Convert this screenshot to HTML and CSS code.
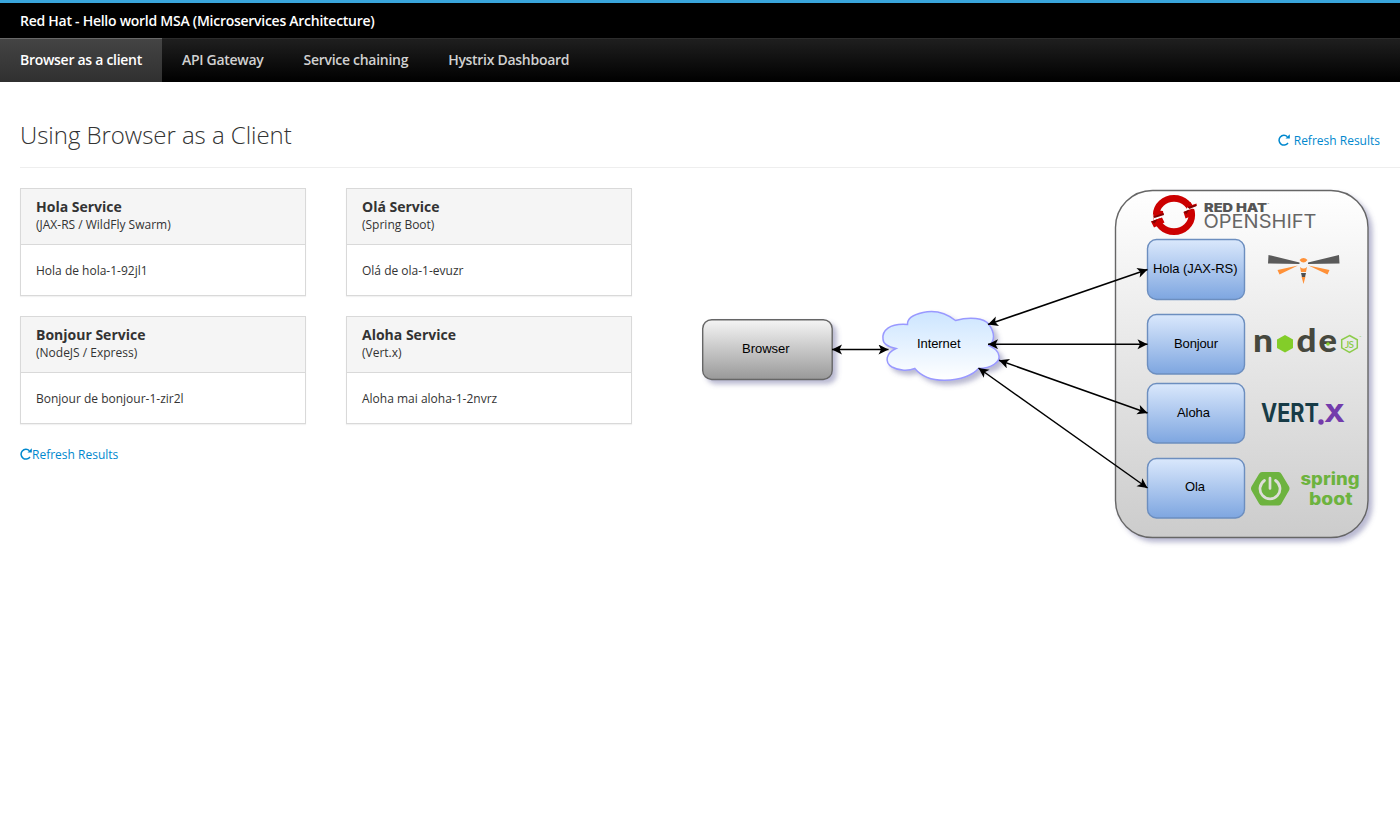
FILE: index.html
```html
<!DOCTYPE html>
<html lang="en">
<head>
<meta charset="utf-8">
<title>Red Hat - Hello world MSA</title>
<link rel="stylesheet" href="styles.css">
</head>
<body>
<header class="masthead">
  <div class="brand">Red Hat - Hello world MSA (Microservices Architecture)</div>
  <nav class="nav">
    <a class="nav-item active">Browser as a client</a>
    <a class="nav-item">API Gateway</a>
    <a class="nav-item">Service chaining</a>
    <a class="nav-item">Hystrix Dashboard</a>
  </nav>
</header>
<main class="page">
  <div class="title-row">
    <h1>Using Browser as a Client</h1>
    <a class="refresh spaced"><svg class="icon" viewBox="0 0 12 12"><path d="M10 9A4.900 4.900 0 1 1 9.400 2.700" fill="none" stroke="currentColor" stroke-width="1.500"/><path d="M11.800 .3V4.600H7.500z" fill="currentColor"/></svg><span>Refresh Results</span></a>
  </div>
  <div class="content">
    <section class="services">
      <div class="cards">
        <article class="card"><div class="card-head"><h2>Hola Service</h2><p>(JAX-RS / WildFly Swarm)</p></div><div class="card-body">Hola de hola-1-92jl1</div></article>
        <article class="card"><div class="card-head"><h2>Olá Service</h2><p>(Spring Boot)</p></div><div class="card-body">Olá de ola-1-evuzr</div></article>
        <article class="card"><div class="card-head"><h2>Bonjour Service</h2><p>(NodeJS / Express)</p></div><div class="card-body">Bonjour de bonjour-1-zir2l</div></article>
        <article class="card"><div class="card-head"><h2>Aloha Service</h2><p>(Vert.x)</p></div><div class="card-body">Aloha mai aloha-1-2nvrz</div></article>
      </div>
      <a class="refresh"><svg class="icon" viewBox="0 0 12 12"><path d="M10 9A4.900 4.900 0 1 1 9.400 2.700" fill="none" stroke="currentColor" stroke-width="1.500"/><path d="M11.800 .3V4.600H7.500z" fill="currentColor"/></svg><span>Refresh Results</span></a>
    </section>
    <svg class="diagram" viewBox="692 188 700 362">
      <defs>
        <linearGradient id="panel" x2="0" y2="1"><stop stop-color="#fff"/><stop offset="1" stop-color="#ccc"/></linearGradient>
        <linearGradient id="grey" x2="0" y2="1"><stop stop-color="#f5f5f5"/><stop offset="1" stop-color="#999"/></linearGradient>
        <linearGradient id="blue" x2="0" y2="1"><stop stop-color="#dae8fc"/><stop offset="1" stop-color="#7ea6e0"/></linearGradient>
        <linearGradient id="sky" x2="0" y2="1"><stop stop-color="#cce5ff"/><stop offset="1" stop-color="#fff"/></linearGradient>
        <filter id="shadow" filterUnits="userSpaceOnUse" x="692" y="180" width="708" height="380"><feDropShadow dx="4" dy="4" stdDeviation="2.600" flood-color="#666699" flood-opacity=".45"/></filter>
        <marker id="arrow" markerUnits="userSpaceOnUse" markerWidth="12" markerHeight="12" refX="10.5" refY="5" orient="auto-start-reverse"><path d="M10.5 5L.5 0l2.5 5-2.5 5z"/></marker>
      </defs>
      <rect x="1115.500" y="190.500" width="252.500" height="347" rx="37" fill="url(#panel)" stroke="#666" stroke-width="1.4" filter="url(#shadow)"/>
      <rect x="702.700" y="319.700" width="129.500" height="59.800" rx="9" fill="url(#grey)" stroke="#666" stroke-width="1.4" filter="url(#shadow)"/>
      <path d="M907.500 324.500C889 323 882 331 883 339C883 344 889 347 896 348.500C886 353 884 362 892 367C899 371 909 371 914.800 368.500C922 377 933 380.500 945 380.300C961 380 973 375 978.500 368.500C992 368 1000 362 999 356C998 350 994 348 989 345.500C995 341 995 333 989 324.500C984 318 970 316.500 955.500 320.500C946 313 934 310 923 312.500C912 315 907 319 907.500 324.500Z" fill="url(#sky)" stroke="#9999ff" stroke-width="1.5" filter="url(#shadow)"/>
      <g class="node"><rect x="1147.500" y="239.500" width="97" height="60" rx="9"/><rect x="1147.500" y="314.500" width="97" height="59.500" rx="9"/><rect x="1147.500" y="383.500" width="97" height="59.500" rx="9"/><rect x="1147.500" y="458.500" width="97" height="59.500" rx="9"/></g>
      <g class="links"><path d="M832 349.500H888.500"/><path d="M988 324.500L1147.500 269.500"/><path d="M988 344.200H1147.500"/><path d="M999 360.300L1147.500 413"/><path d="M978.500 368L1147.500 488"/></g>
      <g class="labels">
        <text x="742" y="353" textLength="47.500">Browser</text><text x="917" y="348" textLength="43.500">Internet</text>
        <text x="1153" y="273" textLength="84.500">Hola (JAX-RS)</text><text x="1174" y="348" textLength="44">Bonjour</text><text x="1177" y="417" textLength="33">Aloha</text><text x="1185" y="491" textLength="20">Ola</text>
      </g>
      <g>
        <ellipse cx="1174" cy="215" rx="17.800" ry="16.600" fill="none" stroke="#c00" stroke-width="6.600"/>
        <path d="M1153.500 214.200l10-.2v3l-10 3.500zM1187 207.500l9.500-2.500v3l-9.500 3z" fill="#fafafa"/>
        <path d="M1153.500 214l1-4 8.500 1 .5 3.500-9.500 3zM1188 208l-1.500-5 4-1 1.500 3 4.500-1.500v2.500zM1151 221.500l11-4 2.500 5-10.500 5zM1183.500 212l9-3.500 2.500 6-9.500 4z" fill="#c00"/>
        <path d="M1153.500 216.500l10-3.500.5 2-9.500 3zM1151 221.500l6.500-2-3 4zM1187.500 207l9-2.500v1.500l-7 3zM1183.500 212l6-2.500-3 4.500z" fill="#820000"/>
        <text class="redhat" x="1204" y="211.500" textLength="63" lengthAdjust="spacingAndGlyphs">RED HAT</text><text x="1267" y="205" font-size="3" fill="#666">™</text>
        <text class="openshift" x="1203.500" y="227.500" textLength="113" lengthAdjust="spacingAndGlyphs">OPENSHIFT</text>
      </g>
      <g>
        <path d="M1268.500 255l31 7.500v1.500l-31.500-.5zM1339 255l-31 7.500v1.500l31.500-.5z" fill="#5a5a5a"/>
        <path d="M1299.500 260q4-4 8 0-4 5-8 0zM1298 265.500l-20.500 4.500 2 4.500zM1308.500 265.500l21 4.500-2 4.500zM1300 267q3.500 3 7 0l-1 5h-5zM1301.500 276.500h4l-2 7.500z" fill="#ff9138"/>
        <path d="M1301 273h5l-1 4h-3z" fill="#505050"/>
      </g>
      <g>
        <text class="nodelogo" x="1253" y="351.500" textLength="20" lengthAdjust="spacingAndGlyphs">n</text>
        <path d="M1285 335l8 4.500v8.500l-8 4.500-8-4.500v-8.500z" fill="#83cd29"/>
        <text class="nodelogo" x="1296.500" y="351.500" textLength="20" lengthAdjust="spacingAndGlyphs">d</text><text class="nodelogo" x="1318.500" y="351.500" textLength="18.500" lengthAdjust="spacingAndGlyphs">e</text>
        <circle cx="1328" cy="344" r="1.800" fill="#83cd29"/>
        <path d="M1349.500 335.500l7.800 4.300v8l-7.800 4.500-7.800-4.500v-8z" fill="none" stroke="#8dcc4b" stroke-width="1.500"/><text x="1345" y="348" class="js" textLength="9">JS</text><text x="1359" y="338" font-size="3" fill="#8dcc4b">™</text>
      </g>
      <g><text class="vertx" x="1261" y="422" textLength="58" lengthAdjust="spacingAndGlyphs">VERT</text><circle cx="1321" cy="422" r="2.700" fill="#733cac"/><text class="vertx x" x="1324" y="422" textLength="21" lengthAdjust="spacingAndGlyphs">X</text></g>
      <g>
        <path d="M1262 472h16.500q2 0 3 2l7.500 12.500q1 2 0 4l-7.500 13q-1 2-3 2H1262q-2 0-3-2l-7.500-13q-1-2 0-4L1259 474q1-2 3-2z" fill="#6db33f"/>
        <path d="M1264.500 480.500a10 10 0 1 0 11 0M1270 478v10.500" fill="none" stroke="#deded9" stroke-width="2.700" stroke-linecap="round"/>
        <text class="spring" x="1300.500" y="485" textLength="59" lengthAdjust="spacingAndGlyphs">spring</text><text class="spring" x="1309" y="505" textLength="43.500" lengthAdjust="spacingAndGlyphs">boot</text>
      </g>
    </svg>
  </div>
</main>
</body>
</html>
```
FILE: styles.css
```css
* { box-sizing: border-box; }
body { margin: 0; background: #fff; color: #333; font: 12px/18px "Open Sans", sans-serif; }
h1, h2, p { margin: 0; }
.masthead { border-top: 3px solid #39a5dc; background: #000; }
.brand { height: 35px; padding: 0 20px; color: #fff; font-size: 14px; font-weight: 600; line-height: 36px; letter-spacing: -.265px; }
.nav { display: flex; height: 44px; background: linear-gradient(#1f1f1f, #000); border-top: 1px solid #2c2c2c; }
.nav-item { padding: 0 20px; margin-top: -1px; border-top: 1px solid transparent; font-size: 14px; font-weight: 600; line-height: 41px; color: #d1d1d1; white-space: nowrap; letter-spacing: -.285px; }
.active { color: #fff; background: linear-gradient(#444, #303030); border-top-color: #696969; }
.page { padding-left: 20px; }
.title-row { display: flex; justify-content: space-between; height: 86px; border-bottom: 1px solid #eee; padding-right: 20px; }
h1 { font-size: 24px; font-weight: 300; line-height: 30px; padding-top: 38px; letter-spacing: -.04px; }
.refresh { display: flex; align-items: center; height: 18px; color: #0088ce; font-size: 12px; }
.refresh span { padding-top: 1px; }
.refresh .icon { margin-bottom: 1px; }
.spaced { gap: 4px; margin-top: 49px; }
.icon { width: 12px; height: 12px; }
.content { display: flex; padding-top: 20px; gap: 60px; }
.services { width: 612px; flex: none; }
.cards { display: grid; grid-template-columns: 286px 286px; gap: 20px 40px; margin-bottom: 21px; }
.card { height: 108px; border: 1px solid #d9d9d9; box-shadow: 0 1px 1px rgba(0,0,0,.05); }
.card-head { height: 56px; padding: 9px 15px; background: #f5f5f5; border-bottom: 1px solid #d9d9d9; }
h2 { font-size: 14px; line-height: 18px; font-weight: 700; }
.card-body { padding: 17px 15px; }
.diagram { width: 700px; height: 362px; flex: none; }
.node rect { fill: url(#blue); stroke: #6c8ebf; stroke-width: 1.4; }
.links path { fill: none; stroke: #000; stroke-width: 1.5; marker-start: url(#arrow); marker-end: url(#arrow); }
.labels { font: 13px "Liberation Sans", sans-serif; fill: #000; }
.redhat { font: 900 11.500px Inter, sans-serif; fill: #555; }
.openshift { font: 400 19px Inter, sans-serif; fill: #666; }
.nodelogo { font: 900 32px Lato, sans-serif; fill: #46483e; }
.js { font: 600 10px Lato, sans-serif; fill: #8dcc4b; }
.vertx { font: 700 25px Inter, sans-serif; fill: #173b46; }
.x { font-weight: 800; fill: #733cac; }
.spring { font: 800 17px Inter, sans-serif; fill: #6db33f; }
```
